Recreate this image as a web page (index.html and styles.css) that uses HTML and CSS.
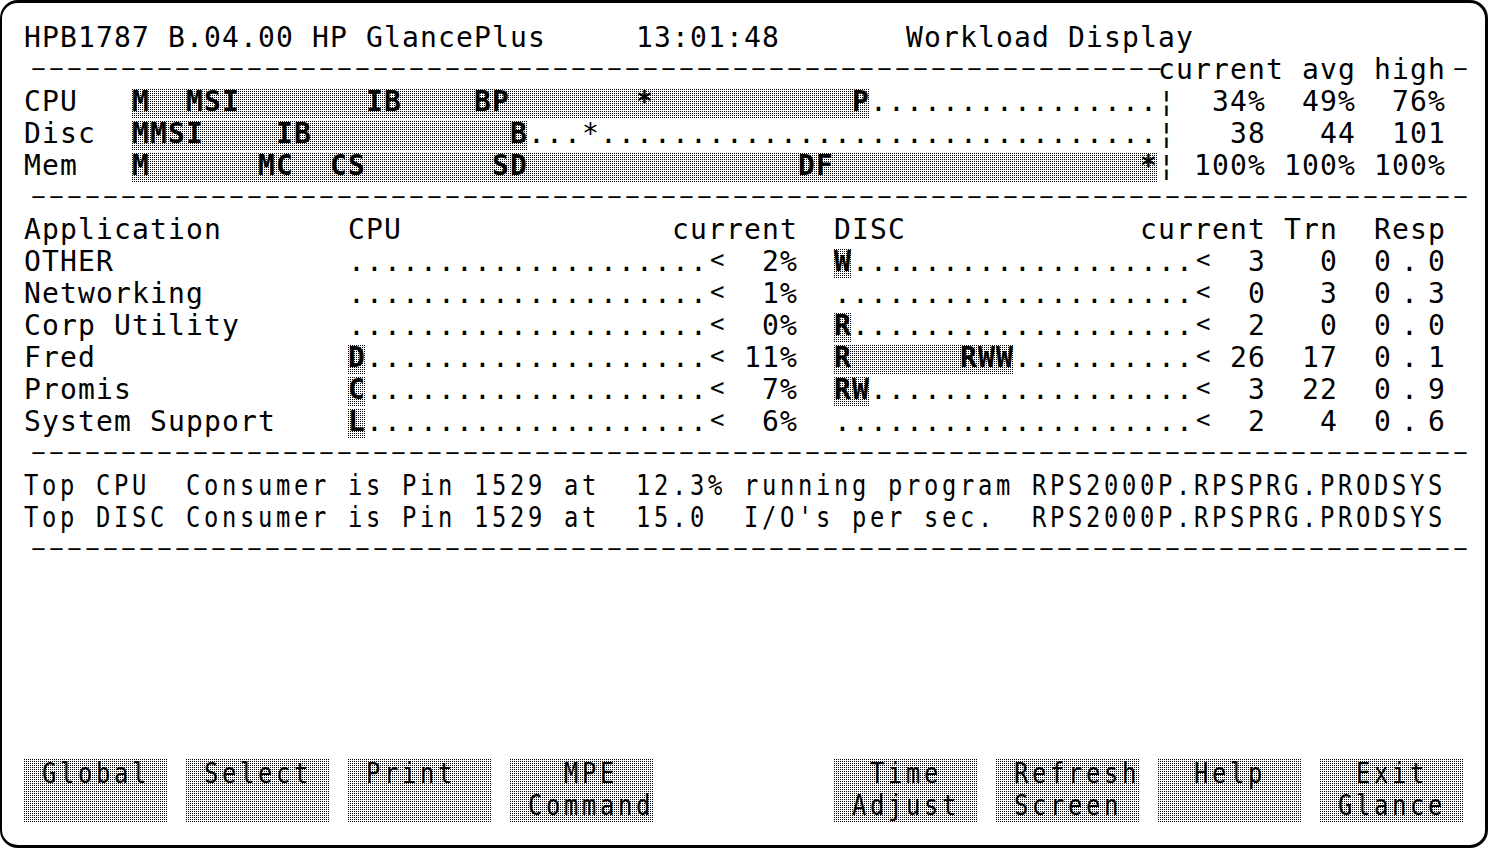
FILE: index.html
```html
<!DOCTYPE html>
<html lang="en">
<head>
    <meta charset="UTF-8">
    <title>HP GlancePlus - Workload Display</title>
    <link rel="stylesheet" href="styles.css">
</head>
<body>
    <div class="screen">
        <div class="line">HPB1787 B.04.00 HP GlancePlus     13:01:48       Workload Display</div>
        <div class="line"><span class="dash">---------------------------------------------------------------</span>current avg high<span class="dash">-</span></div>
        <div class="line">CPU   <span class="bar">M  MSI       IB    BP       *           P</span>................¦  34%  49%  76%</div>
        <div class="line">Disc  <span class="bar">MMSI    IB           B</span>...*...............................¦   38   44  101</div>
        <div class="line">Mem   <span class="bar">M      MC  CS       SD               DF                 *</span>¦ 100% 100% 100%</div>
        <div class="line"><span class="dash">--------------------------------------------------------------------------------</span></div>
        <div class="line">Application       CPU               current  DISC             current Trn  Resp</div>
        <div class="line">OTHER             ....................<span class="lt">&lt;</span>  2%  <span class="bar">W</span>...................<span class="lt">&lt;</span>  3   0  <span class="resp">0.0</span></div>
        <div class="line">Networking        ....................<span class="lt">&lt;</span>  1%  ....................<span class="lt">&lt;</span>  0   3  <span class="resp">0.3</span></div>
        <div class="line">Corp Utility      ....................<span class="lt">&lt;</span>  0%  <span class="bar">R</span>...................<span class="lt">&lt;</span>  2   0  <span class="resp">0.0</span></div>
        <div class="line">Fred              <span class="bar">D</span>...................<span class="lt">&lt;</span> 11%  <span class="bar">R      RWW</span>..........<span class="lt">&lt;</span> 26  17  <span class="resp">0.1</span></div>
        <div class="line">Promis            <span class="bar">C</span>...................<span class="lt">&lt;</span>  7%  <span class="bar">RW</span>..................<span class="lt">&lt;</span>  3  22  <span class="resp">0.9</span></div>
        <div class="line">System Support    <span class="bar">L</span>...................<span class="lt">&lt;</span>  6%  ....................<span class="lt">&lt;</span>  2   4  <span class="resp">0.6</span></div>
        <div class="line"><span class="dash">--------------------------------------------------------------------------------</span></div>
        <div class="line narrow">Top CPU  Consumer is Pin 1529 at  12.3% running program RPS2000P.RPSPRG.PRODSYS</div>
        <div class="line narrow">Top DISC Consumer is Pin 1529 at  15.0  I/O's per sec.  RPS2000P.RPSPRG.PRODSYS</div>
        <div class="line"><span class="dash">--------------------------------------------------------------------------------</span></div>

        <div class="keys">
            <div class="key"><div class="key-line"> Global</div><div class="key-line"></div></div>
            <div class="key"><div class="key-line"> Select</div><div class="key-line"></div></div>
            <div class="key"><div class="key-line"> Print</div><div class="key-line"></div></div>
            <div class="key"><div class="key-line">   MPE</div><div class="key-line"> Command</div></div>
            <div class="key second-group"><div class="key-line">  Time</div><div class="key-line"> Adjust</div></div>
            <div class="key"><div class="key-line"> Refresh</div><div class="key-line"> Screen</div></div>
            <div class="key"><div class="key-line">  Help</div><div class="key-line"></div></div>
            <div class="key"><div class="key-line">  Exit</div><div class="key-line"> Glance</div></div>
        </div>
    </div>
</body>
</html>
```

FILE: styles.css
```css
body {
    margin: 0;
    background: #fff;
    color: #000;
    font-family: "DejaVu Sans Mono", monospace;
}
.screen {
    width: 1488px;
    height: 848px;
    box-sizing: border-box;
    border: 3px solid #000;
    border-left-width: 2px;
    border-radius: 18px;
    padding: 19px 0 0 22px;
    overflow: hidden;
}
/* one terminal row: 80 cells of 18px, 32px high */
.line {
    height: 32px;
    line-height: 32px;
    font-size: 28px;
    letter-spacing: 1.143px;
    white-space: pre;
}
.dash {
    display: inline-block;
    vertical-align: top;
    height: 32px;
    font-size: 48px;
    letter-spacing: -10.898px;
    transform-origin: 50% 11.4px;
    transform: scaleY(0.46);
}
.bar {
    display: inline-block;
    vertical-align: top;
    height: 32px;
    font-weight: bold;
    background-color: #fff;
    background-image: linear-gradient(#fff 1px, transparent 1px), linear-gradient(90deg, #000 1px, #fff 1px);
    background-size: 2px 2px;
    box-shadow: inset 0 3px #fff;
}
.lt {
    display: inline-block;
    vertical-align: top;
    box-sizing: border-box;
    width: 18px;
    padding-left: 2px;
    font-size: 24px;
    line-height: 28px;
    letter-spacing: 0;
}
.resp {
    letter-spacing: 10.143px;
}
.narrow {
    letter-spacing: 4.319px;
    transform: scaleX(0.85);
    transform-origin: 0 0;
}
.keys {
    margin-top: 192px;
    display: grid;
    grid-template-columns: repeat(9, 144px);
    column-gap: 18px;
}
.key {
    height: 64px;
    background-color: #fff;
    background-image: linear-gradient(#fff 1px, transparent 1px), linear-gradient(90deg, #000 1px, #fff 1px);
    background-size: 2px 2px;
}
.second-group {
    grid-column-start: 6;
}
.key-line {
    height: 32px;
    line-height: 32px;
    font-size: 28px;
    letter-spacing: 4.319px;
    white-space: pre;
    transform: scaleX(0.85);
    transform-origin: 0 0;
}
```
